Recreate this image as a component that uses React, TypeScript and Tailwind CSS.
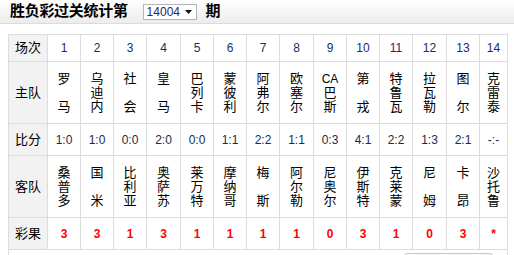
import React from "react";

type Match = {
  no: number;
  home: string[];
  score: string;
  away: string[];
  result: string;
};

const matches: Match[] = [
  { no: 1, home: ["罗", "", "马"], score: "1:0", away: ["桑", "普", "多"], result: "3" },
  { no: 2, home: ["乌", "迪", "内"], score: "1:0", away: ["国", "", "米"], result: "3" },
  { no: 3, home: ["社", "", "会"], score: "0:0", away: ["比", "利", "亚"], result: "1" },
  { no: 4, home: ["皇", "", "马"], score: "2:0", away: ["奥", "萨", "苏"], result: "3" },
  { no: 5, home: ["巴", "列", "卡"], score: "0:0", away: ["莱", "万", "特"], result: "1" },
  { no: 6, home: ["蒙", "彼", "利"], score: "1:1", away: ["摩", "纳", "哥"], result: "1" },
  { no: 7, home: ["阿", "弗", "尔"], score: "2:2", away: ["梅", "", "斯"], result: "1" },
  { no: 8, home: ["欧", "塞", "尔"], score: "1:1", away: ["阿", "尔", "勒"], result: "1" },
  { no: 9, home: ["CA", "巴", "斯"], score: "0:3", away: ["尼", "奥", "尔"], result: "0" },
  { no: 10, home: ["第", "", "戎"], score: "4:1", away: ["伊", "斯", "特"], result: "3" },
  { no: 11, home: ["特", "鲁", "瓦"], score: "2:2", away: ["克", "莱", "蒙"], result: "1" },
  { no: 12, home: ["拉", "瓦", "勒"], score: "1:3", away: ["尼", "", "姆"], result: "0" },
  { no: 13, home: ["图", "", "尔"], score: "2:1", away: ["卡", "", "昂"], result: "3" },
  { no: 14, home: ["克", "雷", "泰"], score: "-:-", away: ["沙", "托", "鲁"], result: "*" },
];

const widths = [33, 33, 33, 34, 33, 33, 33, 34, 33, 33, 33, 34, 33, 28];

const Stack = ({ chars }: { chars: string[] }) => (
  <div className="flex flex-col items-center text-[13px] leading-[14px]">
    {chars.map((c, i) => (
      <span key={i} className={c.length > 1 ? "h-[14px] text-[12px]" : "h-[14px]"}>
        {c || "\u00a0"}
      </span>
    ))}
  </div>
);

const label = "border border-[#dcdcdc] bg-[#f2f2f2] text-center text-[13px]";
const cell = "border border-[#dcdcdc] text-center p-0";

export default function App() {
  return (
    <div
      className="w-[514px] h-[255px] overflow-hidden bg-white text-[12px] text-black"
      style={{ fontFamily: '"Liberation Sans", Arial, "Noto Sans CJK SC", sans-serif' }}
    >
      <div className="h-[24px] flex items-center pl-[10px] bg-gradient-to-b from-white to-[#ececec] border-b border-[#dcdcdc]">
        <span className="text-[15px] font-bold tracking-[-0.3px]">胜负彩过关统计第</span>
        <div className="ml-[15px] w-[54px] h-[16px] border border-[#b5b5b5] bg-white flex items-center justify-between pl-[3px] pr-[4px] text-[12px] text-[#1c2a6a]">
          <span>14004</span>
          <svg width="7" height="4" viewBox="0 0 7 4">
            <path d="M0 0h7L3.5 4z" fill="#111" />
          </svg>
        </div>
        <span className="ml-[9px] text-[15px] font-bold">期</span>
      </div>

      <div className="pl-[8px] pt-[10px]">
        <table className="border-collapse table-fixed w-[500px]">
          <colgroup>
            <col style={{ width: 39 }} />
            {widths.map((w, i) => (
              <col key={i} style={{ width: w }} />
            ))}
          </colgroup>
          <tbody>
            <tr className="h-[27px]">
              <td className={label}>场次</td>
              {matches.map((m) => (
                <td key={m.no} className={`${cell} text-[#1c2a6a]`}>
                  {m.no}
                </td>
              ))}
            </tr>
            <tr className="h-[62px]">
              <td className={label}>主队</td>
              {matches.map((m) => (
                <td key={m.no} className={cell}>
                  <Stack chars={m.home} />
                </td>
              ))}
            </tr>
            <tr className="h-[32px]">
              <td className={label}>比分</td>
              {matches.map((m) => (
                <td key={m.no} className={`${cell} text-[#1c2a4a]`}>
                  {m.score}
                </td>
              ))}
            </tr>
            <tr className="h-[62px]">
              <td className={label}>客队</td>
              {matches.map((m) => (
                <td key={m.no} className={cell}>
                  <Stack chars={m.away} />
                </td>
              ))}
            </tr>
            <tr className="h-[32px]">
              <td className={label}>彩果</td>
              {matches.map((m) => (
                <td key={m.no} className={`${cell} font-bold text-[#ff0000]`}>
                  {m.result}
                </td>
              ))}
            </tr>
          </tbody>
        </table>
        <div className="w-[500px] h-[10px] border-x border-[#dcdcdc] flex justify-end pr-[14px] pt-[3px]">
          <div className="w-[89px] h-[10px] border border-[#c8c8c8] rounded-[3px] bg-[#f8f8f8]" />
        </div>
      </div>
    </div>
  );
}
